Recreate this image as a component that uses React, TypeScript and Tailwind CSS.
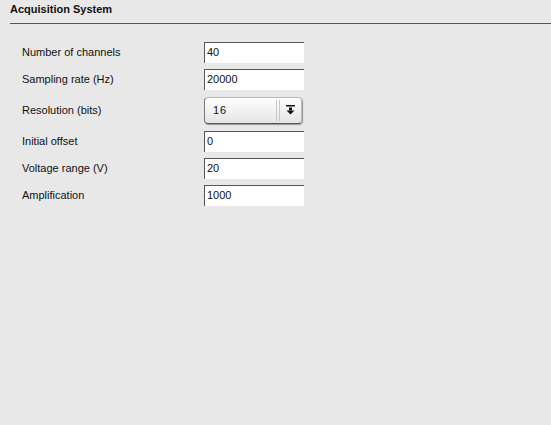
import React from "react";

const font = { fontFamily: '"Liberation Sans", Arial, sans-serif' };

function Field({ label, value }: { label: string; value: string }) {
  return (
    <div className="flex h-[27px] items-center">
      <span className="w-[182px] text-[11px] text-[#111]">{label}</span>
      <div className="flex h-[21px] w-[100px] items-center border-l border-t border-[#555] bg-white pl-[2px] text-[11px] text-[#111]">
        {value}
      </div>
    </div>
  );
}

function Select({ label, value }: { label: string; value: string }) {
  return (
    <div className="flex h-[35px] items-center">
      <span className="w-[182px] text-[11px] text-[#111]">{label}</span>
      <div className="flex h-[27px] w-[98px] items-center rounded-[4px] border border-[#b8b8b8] border-b-[#555] border-l-[#777] bg-gradient-to-b from-white to-[#e4e4e4] shadow-[1px_1px_1px_rgba(0,0,0,0.35)]">
        <span className="flex-1 pl-[8px] text-[11px] tracking-[1px] text-[#111]">{value}</span>
        <div className="flex h-full gap-[2px] py-[2px]">
          <div className="w-px bg-[#c8c8c8]" />
          <div className="w-px bg-[#c8c8c8]" />
        </div>
        <div className="flex w-[21px] items-center justify-center">
          <svg width="9" height="10" viewBox="0 0 9 10">
            <rect x="0" y="0" width="9" height="1.5" fill="#111" />
            <rect x="3" y="2.5" width="3" height="3" fill="#111" />
            <polygon points="0.5,5.5 8.5,5.5 4.5,9.5" fill="#111" />
          </svg>
        </div>
      </div>
    </div>
  );
}

export default function App() {
  return (
    <div className="h-[425px] w-[551px] bg-[#e8e8e8]" style={font}>
      <div className="pl-[10px] pt-[1px]">
        <div className="text-[11px] font-bold text-[#111]">Acquisition System</div>
        <div className="mt-[5px] h-px bg-[#555]" />
      </div>
      <div className="flex flex-col pl-[22px] pt-[15px]">
        <Field label="Number of channels" value="40" />
        <Field label="Sampling rate (Hz)" value="20000" />
        <Select label="Resolution (bits)" value="16" />
        <Field label="Initial offset" value="0" />
        <Field label="Voltage range (V)" value="20" />
        <Field label="Amplification" value="1000" />
      </div>
    </div>
  );
}
